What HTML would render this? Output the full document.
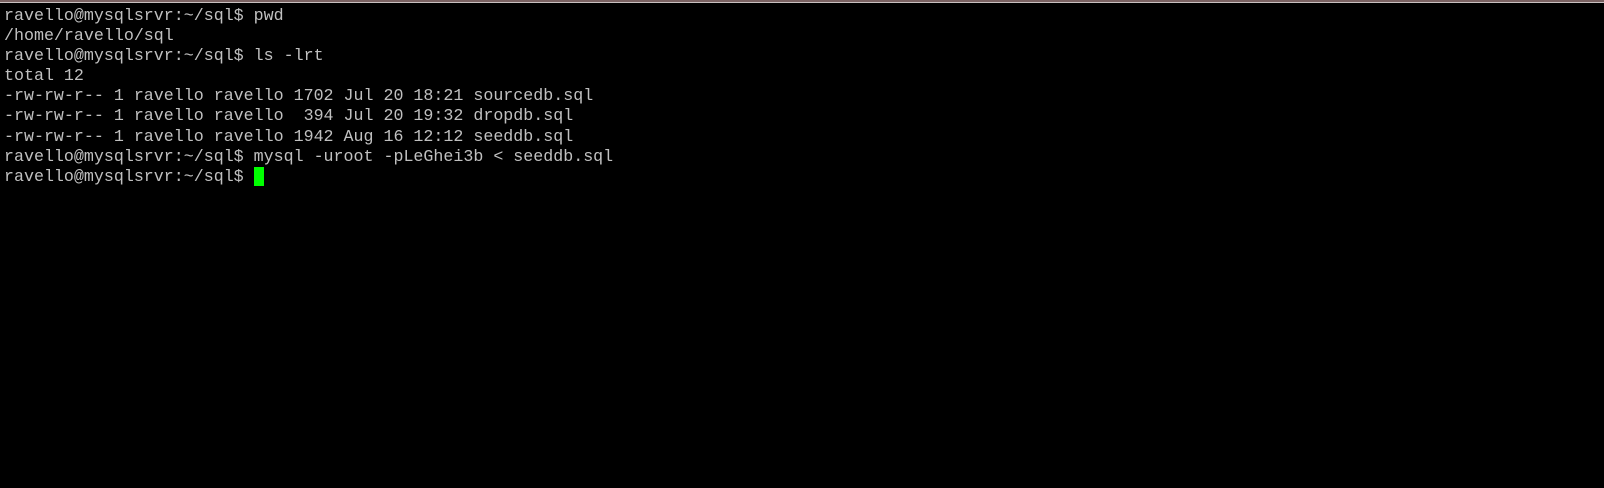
<!DOCTYPE html>
<html><head><meta charset="utf-8"><style>
html,body{margin:0;padding:0;background:#000;width:1604px;height:488px;overflow:hidden}
.top{position:absolute;left:0;top:0;width:1604px;height:2px;background:#7a6262}
.top2{position:absolute;left:0;top:2px;width:1604px;height:1px;background:#c8c0c0}
pre{position:absolute;left:4px;top:6px;margin:0;font-family:"Liberation Mono",monospace;font-size:16.65px;line-height:20.1px;color:#c0c0c0}
.cur{position:absolute;left:254px;top:167px;width:10px;height:19px;background:#00ff00}
</style></head><body>
<div class="top"></div><div class="top2"></div>
<pre>ravello@mysqlsrvr:~/sql$ pwd
/home/ravello/sql
ravello@mysqlsrvr:~/sql$ ls -lrt
total 12
-rw-rw-r-- 1 ravello ravello 1702 Jul 20 18:21 sourcedb.sql
-rw-rw-r-- 1 ravello ravello  394 Jul 20 19:32 dropdb.sql
-rw-rw-r-- 1 ravello ravello 1942 Aug 16 12:12 seeddb.sql
ravello@mysqlsrvr:~/sql$ mysql -uroot -pLeGhei3b &lt; seeddb.sql
ravello@mysqlsrvr:~/sql$ </pre>
<div class="cur"></div>
</body></html>
